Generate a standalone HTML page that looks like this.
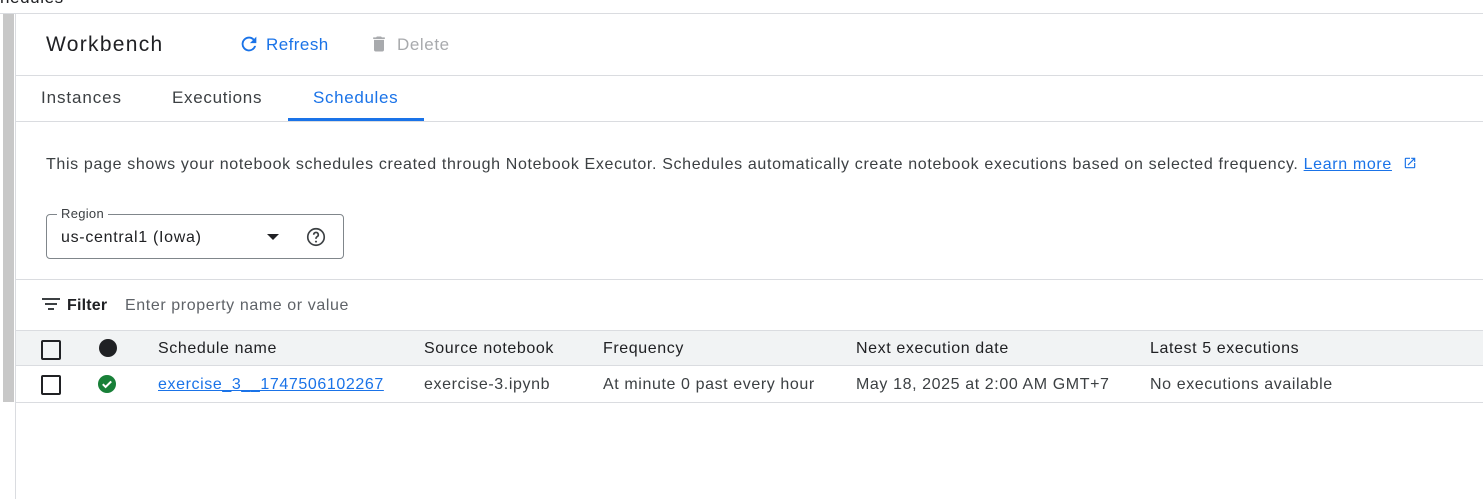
<!DOCTYPE html>
<html><head><style>
*{box-sizing:border-box;margin:0;padding:0}
body{width:1483px;height:499px;overflow:hidden;background:#fff;font-family:"Liberation Sans",sans-serif;color:#3c4043;position:relative}
.a{position:absolute;white-space:nowrap;letter-spacing:0.6px}
.hl{position:absolute;height:1px;background:#dadce0}
</style></head><body>
<div class="a" style="left:0;top:-12px;font-size:17px;color:#202124">hedules</div>
<div class="hl" style="left:0;top:13px;width:1483px"></div>
<div style="position:absolute;left:3px;top:14px;width:11px;height:388px;background:#c8c8c8"></div>
<div style="position:absolute;left:15px;top:14px;width:1px;height:485px;background:#dadce0"></div>
<div class="a" style="left:46px;top:33px;font-size:21px;color:#202124;letter-spacing:1.3px">Workbench</div>
<svg class="a" style="left:238px;top:33px" width="22" height="22" viewBox="0 0 24 24"><path fill="#1a73e8" d="M17.65 6.35A7.96 7.96 0 0 0 12 4a8 8 0 1 0 7.73 10h-2.08A6 6 0 1 1 12 6c1.66 0 3.14.69 4.22 1.78L13 11h7V4l-2.35 2.35z"/></svg>
<div class="a" style="left:266px;top:35px;font-size:17px;color:#1a73e8;letter-spacing:0.45px">Refresh</div>
<svg class="a" style="left:369px;top:34px" width="20" height="20" viewBox="0 0 24 24"><path fill="#a8aaad" d="M6 19c0 1.1.9 2 2 2h8c1.1 0 2-.9 2-2V7H6v12zM19 4h-3.5l-1-1h-5l-1 1H5v2h14V4z"/></svg>
<div class="a" style="left:397px;top:35px;font-size:17px;color:#a8aaad;letter-spacing:0.6px">Delete</div>
<div class="hl" style="left:16px;top:75px;width:1467px"></div>
<div class="a" style="left:41px;top:88px;font-size:17px;letter-spacing:0.9px">Instances</div>
<div class="a" style="left:172px;top:88px;font-size:17px;letter-spacing:0.7px">Executions</div>
<div class="a" style="left:313px;top:88px;font-size:17px;color:#1a73e8;letter-spacing:0.65px">Schedules</div>
<div style="position:absolute;left:288px;top:118px;width:136px;height:3px;background:#1a73e8"></div>
<div class="hl" style="left:16px;top:121px;width:1467px"></div>
<div class="a" style="left:46px;top:156px;font-size:16px;letter-spacing:0.65px">This page shows your notebook schedules created through Notebook Executor. Schedules automatically create notebook executions based on selected frequency. <span style="color:#1a73e8;text-decoration:underline">Learn more</span></div>
<svg class="a" style="left:1403px;top:156px" width="14" height="14" viewBox="0 0 24 24"><path fill="#1a73e8" d="M19 19H5V5h7V3H5a2 2 0 0 0-2 2v14a2 2 0 0 0 2 2h14c1.1 0 2-.9 2-2v-7h-2v7zM14 3v2h3.59l-9.83 9.83 1.41 1.41L19 6.41V10h2V3h-7z"/></svg>
<div style="position:absolute;left:46px;top:214px;width:298px;height:45px;border:1px solid #80868b;border-radius:4px"></div>
<div class="a" style="left:57px;top:206px;font-size:13px;background:#fff;padding:0 4px;letter-spacing:0.3px">Region</div>
<div class="a" style="left:61px;top:229px;font-size:16px;color:#202124;letter-spacing:0.7px">us-central1 (Iowa)</div>
<div style="position:absolute;left:267px;top:234px;border-left:6px solid transparent;border-right:6px solid transparent;border-top:6px solid #202124"></div>
<svg class="a" style="left:305px;top:226px" width="22" height="22" viewBox="0 0 24 24"><circle cx="12" cy="12" r="9" fill="none" stroke="#3c4043" stroke-width="1.8"/><path d="M9.5 9.5a2.5 2.5 0 1 1 3.5 2.3c-.7.4-1 .8-1 1.7v.5" fill="none" stroke="#3c4043" stroke-width="1.8"/><circle cx="12" cy="17" r="1.1" fill="#3c4043"/></svg>
<div class="hl" style="left:16px;top:279px;width:1467px"></div>
<svg class="a" style="left:42px;top:297px" width="18" height="14" viewBox="0 0 18 14"><rect x="0" y="1" width="18" height="2" fill="#3c4043"/><rect x="3" y="6" width="12" height="2" fill="#3c4043"/><rect x="6" y="11" width="6" height="2" fill="#3c4043"/></svg>
<div class="a" style="left:67px;top:297px;font-size:16px;color:#202124;font-weight:bold;letter-spacing:0.2px">Filter</div>
<div class="a" style="left:125px;top:297px;font-size:16px;color:#5f6368">Enter property name or value</div>
<div style="position:absolute;left:16px;top:330px;width:1467px;height:36px;background:#f1f3f4;border-top:1px solid #dadce0;border-bottom:1px solid #dadce0"></div>
<div style="position:absolute;left:41px;top:340px;width:20px;height:20px;border:2px solid #202124;border-radius:2px"></div>
<div style="position:absolute;left:99px;top:339px;width:18px;height:18px;border-radius:50%;background:#202124"></div>
<div class="a" style="left:158px;top:340px;font-size:16px;color:#202124">Schedule name</div>
<div class="a" style="left:424px;top:340px;font-size:16px;color:#202124">Source notebook</div>
<div class="a" style="left:603px;top:340px;font-size:16px;color:#202124">Frequency</div>
<div class="a" style="left:856px;top:340px;font-size:16px;color:#202124">Next execution date</div>
<div class="a" style="left:1150px;top:340px;font-size:16px;color:#202124">Latest 5 executions</div>
<div style="position:absolute;left:41px;top:375px;width:20px;height:20px;border:2px solid #202124;border-radius:2px"></div>
<svg class="a" style="left:98px;top:375px" width="18" height="18" viewBox="0 0 18 18"><circle cx="9" cy="9" r="9" fill="#188038"/><path d="M4.8 9.2l2.8 2.8 5.6-5.6" fill="none" stroke="#fff" stroke-width="2"/></svg>
<div class="a" style="left:158px;top:376px;font-size:16px;color:#1a73e8;text-decoration:underline">exercise_3__1747506102267</div>
<div class="a" style="left:424px;top:376px;font-size:16px">exercise-3.ipynb</div>
<div class="a" style="left:603px;top:376px;font-size:16px">At minute 0 past every hour</div>
<div class="a" style="left:856px;top:376px;font-size:16px">May 18, 2025 at 2:00 AM GMT+7</div>
<div class="a" style="left:1150px;top:376px;font-size:16px">No executions available</div>
<div class="hl" style="left:16px;top:402px;width:1467px"></div>
</body></html>
